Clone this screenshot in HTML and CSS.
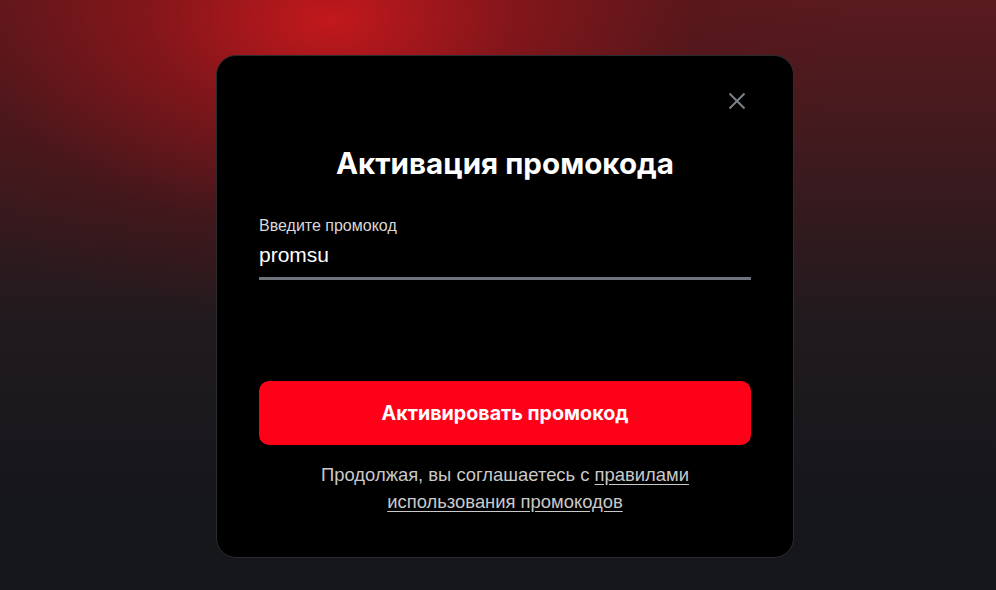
FILE: index.html
```html
<!DOCTYPE html>
<html lang="ru">
<head>
<meta charset="utf-8">
<link rel="stylesheet" href="styles.css">
</head>
<body>
<div class="page">
  <div class="modal">
    <div class="top">
      <button class="close" aria-label="Закрыть">
        <svg width="18" height="18" viewBox="0 0 18 18"><path d="M1.5 1.5 L16.5 16.5 M16.5 1.5 L1.5 16.5" stroke="#7b8089" stroke-width="2" fill="none"/></svg>
      </button>
    </div>
    <h1 class="title">Активация промокода</h1>
    <div class="field">
      <label class="label">Введите промокод</label>
      <div class="value">promsu</div>
    </div>
    <button class="submit">Активировать промокод</button>
    <p class="note">Продолжая, вы соглашаетесь с <a href="#">правилами<br>использования промокодов</a></p>
  </div>
</div>
</body>
</html>
```
FILE: styles.css
```css
* { box-sizing: border-box; }
html, body { margin: 0; height: 100%; }
body {
  font-family: "Liberation Sans", Arial, sans-serif;
  background: #16171b;
}
.page {
  width: 996px;
  height: 590px;
  background:
    radial-gradient(ellipse 520px 300px at 330px 20px, rgba(200,24,28,0.95) 0%, rgba(150,20,25,0.7) 35%, rgba(90,18,22,0.35) 70%, rgba(22,23,27,0) 100%),
    linear-gradient(180deg, #5a1a1e 0%, #3a1a1e 30%, #201a1e 55%, #16171b 85%, #16171b 100%);
  display: flex;
  justify-content: center;
  padding-top: 55px;
  padding-left: 14px;
}
.modal {
  width: 578px;
  height: 503px;
  background: #000;
  border: 1px solid #2b2c31;
  border-radius: 20px;
  padding: 0 42px 0 42px;
  display: flex;
  flex-direction: column;
}
.top {
  display: flex;
  justify-content: flex-end;
  padding-top: 36px;
  margin-right: 5px;
}
.close {
  background: none;
  border: 0;
  padding: 0;
  width: 18px;
  height: 18px;
  cursor: pointer;
  display: block;
}
.close svg { display: block; }
.title {
  margin: 35px 0 0;
  text-align: center;
  font-family: "Inter", sans-serif;
  font-weight: 700;
  font-size: 29.6px;
  line-height: 36px;
  color: #fff;
}
.field {
  margin-top: 36px;
  border-bottom: 3px solid #6f747c;
  padding-bottom: 9px;
}
.label {
  display: block;
  font-size: 16px;
  line-height: 18px;
  color: #d8d8d8;
}
.value {
  margin-top: 7px;
  font-size: 21px;
  line-height: 26px;
  color: #fff;
}
.submit {
  margin-top: 101px;
  height: 64px;
  border: 0;
  border-radius: 10px;
  background: #ff0019;
  color: #fff;
  font-family: "Inter", sans-serif;
  font-weight: 700;
  font-size: 19.7px;
  cursor: pointer;
}
.note {
  margin: 16px 0 0;
  text-align: center;
  font-size: 18.4px;
  line-height: 27px;
  color: #c9c9c9;
}
.note a {
  color: #c9c9c9;
  text-decoration: underline;
  text-underline-offset: 3px;
}
```
